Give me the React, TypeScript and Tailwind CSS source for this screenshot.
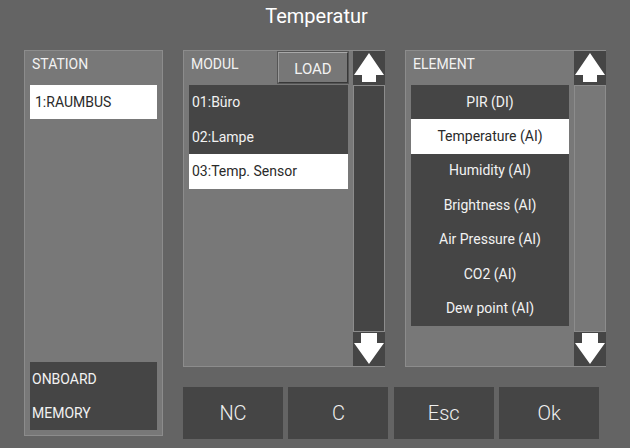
import React from 'react'

const MODULES = ['01:Büro', '02:Lampe', '03:Temp. Sensor']
const ELEMENTS = ['PIR (DI)', 'Temperature (AI)', 'Humidity (AI)', 'Brightness (AI)', 'Air Pressure (AI)', 'CO2 (AI)', 'Dew point (AI)']

function UpArrow() {
  return (
    <svg width="30" height="30" viewBox="0 0 30 30" className="block">
      <polygon points="15,0 30,22 22,22 22,29 8,29 8,22 0,22" fill="#ffffff" />
    </svg>
  )
}

function DownArrow() {
  return (
    <svg width="30" height="32" viewBox="0 0 30 32" className="block">
      <polygon points="7,0 23,0 23,10 30,10 15,31 0,10 7,10" fill="#ffffff" />
    </svg>
  )
}

function ScrollBar({ dark }: { dark: boolean }) {
  return (
    <div className="flex w-[32px] flex-col">
      <div className="flex h-[34px] items-center justify-center bg-[#454545]">
        <UpArrow />
      </div>
      <div className={`flex-1 border-x border-y border-[#8c8c8c] ${dark ? 'bg-[#454545]' : 'bg-[#787878]'}`} />
      <div className="flex h-[34px] items-start justify-center bg-[#454545] pt-[1px]">
        <DownArrow />
      </div>
    </div>
  )
}

export default function App() {
  return (
    <div
      className="flex h-[448px] w-[630px] flex-col overflow-hidden bg-[#646464] text-[14px] text-[#f2f2f2]"
      style={{ fontFamily: 'Roboto, "Liberation Sans", sans-serif' }}
    >
      {/* Title */}
      <div className="flex h-[50px] justify-center pl-[3px] pt-[3px] text-[20px] leading-[26px] text-white">Temperatur</div>

      <div className="flex gap-[20px] pl-[24px]">
        {/* Station */}
        <div className="flex h-[386px] w-[139px] flex-col border border-[#8c8c8c] bg-[#787878] px-[5px] pb-[5px]">
          <div className="h-[34px] pl-[2px] pt-[3px]">STATION</div>
          <div className="flex h-[34px] items-center bg-white pl-[5px] text-[#2a2a2a]">1:RAUMBUS</div>
          <div className="flex-1" />
          <div className="flex flex-col bg-[#454545] pl-[2px]">
            <div className="flex h-[34px] items-center">ONBOARD</div>
            <div className="flex h-[34px] items-center">MEMORY</div>
          </div>
        </div>

        <div className="flex flex-col">
          <div className="flex gap-[20px]">
            {/* Modul */}
            <div className="flex h-[317px] w-[202px] border-y border-l border-[#8c8c8c]">
              <div className="flex flex-1 flex-col bg-[#787878] pl-[5px] pr-[5px]">
                <div className="flex h-[34px] items-start justify-between">
                  <span className="pl-[2px] pt-[3px]">MODUL</span>
                  <button className="mt-[1px] flex h-[31px] w-[70px] items-center justify-center border border-t-[#a8a8a8] border-l-[#9a9a9a] border-r-[#383838] border-b-[#383838] bg-[#777777] pt-[3px] text-[15px] shadow-[0_0_0_1px_#555]">
                    LOAD
                  </button>
                </div>
                {MODULES.map((m, i) => (
                  <div
                    key={m}
                    className={`flex h-[34.7px] items-center pl-[3px] ${i === 2 ? 'bg-white text-[#2a2a2a]' : 'bg-[#454545]'}`}
                  >
                    {m}
                  </div>
                ))}
              </div>
              <ScrollBar dark />
            </div>

            {/* Element */}
            <div className="flex h-[317px] w-[201px] border-y border-l border-[#8c8c8c]">
              <div className="flex flex-1 flex-col bg-[#787878] px-[5px]">
                <div className="h-[34px] pl-[2px] pt-[3px]">ELEMENT</div>
                {ELEMENTS.map((e, i) => (
                  <div
                    key={e}
                    className={`flex h-[34.4px] items-center justify-center ${i === 1 ? 'bg-white text-[#2a2a2a]' : 'bg-[#454545]'}`}
                  >
                    {e}
                  </div>
                ))}
              </div>
              <ScrollBar dark={false} />
            </div>
          </div>

          {/* Buttons */}
          <div className="mt-[20px] flex gap-[5.4px]">
            {['NC', 'C', 'Esc', 'Ok'].map(b => (
              <div key={b} className="flex h-[52px] w-[100px] items-center justify-center bg-[#454545] text-[20px] font-light text-[#f0f0f0]">
                {b}
              </div>
            ))}
          </div>
        </div>
      </div>
    </div>
  )
}
